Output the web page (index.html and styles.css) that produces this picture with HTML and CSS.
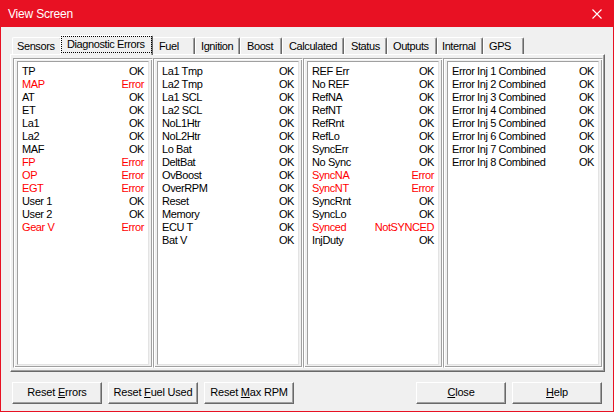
FILE: index.html
```html
<!DOCTYPE html>
<html>
<head>
<meta charset="utf-8">
<title>View Screen</title>
<link rel="stylesheet" href="styles.css">
</head>
<body>
<div class="window">
  <div class="titlebar">
    <span class="title">View Screen</span>
    <svg class="close" width="10" height="10" viewBox="0 0 10 10"><path d="M0.5 0.5 L9.5 9.5 M9.5 0.5 L0.5 9.5" stroke="#fff" stroke-width="1.1" fill="none"/></svg>
  </div>
  <div class="main">
    <div class="tabs">
      <div class="tab w-sensors">Sensors</div>
      <div class="tab tab-active"><span class="focus">Diagnostic Errors</span></div>
      <div class="tab w-fuel">Fuel</div>
      <div class="tab w-ignition">Ignition</div>
      <div class="tab w-boost">Boost</div>
      <div class="tab w-calc">Calculated</div>
      <div class="tab w-status">Status</div>
      <div class="tab w-outputs">Outputs</div>
      <div class="tab w-internal">Internal</div>
      <div class="tab w-gps">GPS</div>
    </div>
    <div class="panel">
      <div class="frame c1">
        <div class="list">
          <div class="row"><span>TP</span><span>OK</span></div>
          <div class="row err"><span>MAP</span><span>Error</span></div>
          <div class="row"><span>AT</span><span>OK</span></div>
          <div class="row"><span>ET</span><span>OK</span></div>
          <div class="row"><span>La1</span><span>OK</span></div>
          <div class="row"><span>La2</span><span>OK</span></div>
          <div class="row"><span>MAF</span><span>OK</span></div>
          <div class="row err"><span>FP</span><span>Error</span></div>
          <div class="row err"><span>OP</span><span>Error</span></div>
          <div class="row err"><span>EGT</span><span>Error</span></div>
          <div class="row"><span>User 1</span><span>OK</span></div>
          <div class="row"><span>User 2</span><span>OK</span></div>
          <div class="row err"><span>Gear V</span><span>Error</span></div>
        </div>
      </div>
      <div class="frame c2">
        <div class="list">
          <div class="row"><span>La1 Tmp</span><span>OK</span></div>
          <div class="row"><span>La2 Tmp</span><span>OK</span></div>
          <div class="row"><span>La1 SCL</span><span>OK</span></div>
          <div class="row"><span>La2 SCL</span><span>OK</span></div>
          <div class="row"><span>NoL1Htr</span><span>OK</span></div>
          <div class="row"><span>NoL2Htr</span><span>OK</span></div>
          <div class="row"><span>Lo Bat</span><span>OK</span></div>
          <div class="row"><span>DeltBat</span><span>OK</span></div>
          <div class="row"><span>OvBoost</span><span>OK</span></div>
          <div class="row"><span>OverRPM</span><span>OK</span></div>
          <div class="row"><span>Reset</span><span>OK</span></div>
          <div class="row"><span>Memory</span><span>OK</span></div>
          <div class="row"><span>ECU T</span><span>OK</span></div>
          <div class="row"><span>Bat V</span><span>OK</span></div>
        </div>
      </div>
      <div class="frame c3">
        <div class="list">
          <div class="row"><span>REF Err</span><span>OK</span></div>
          <div class="row"><span>No REF</span><span>OK</span></div>
          <div class="row"><span>RefNA</span><span>OK</span></div>
          <div class="row"><span>RefNT</span><span>OK</span></div>
          <div class="row"><span>RefRnt</span><span>OK</span></div>
          <div class="row"><span>RefLo</span><span>OK</span></div>
          <div class="row"><span>SyncErr</span><span>OK</span></div>
          <div class="row"><span>No Sync</span><span>OK</span></div>
          <div class="row err"><span>SyncNA</span><span>Error</span></div>
          <div class="row err"><span>SyncNT</span><span>Error</span></div>
          <div class="row"><span>SyncRnt</span><span>OK</span></div>
          <div class="row"><span>SyncLo</span><span>OK</span></div>
          <div class="row err"><span>Synced</span><span>NotSYNCED</span></div>
          <div class="row"><span>InjDuty</span><span>OK</span></div>
        </div>
      </div>
      <div class="frame c4">
        <div class="list">
          <div class="row"><span>Error Inj 1 Combined</span><span>OK</span></div>
          <div class="row"><span>Error Inj 2 Combined</span><span>OK</span></div>
          <div class="row"><span>Error Inj 3 Combined</span><span>OK</span></div>
          <div class="row"><span>Error Inj 4 Combined</span><span>OK</span></div>
          <div class="row"><span>Error Inj 5 Combined</span><span>OK</span></div>
          <div class="row"><span>Error Inj 6 Combined</span><span>OK</span></div>
          <div class="row"><span>Error Inj 7 Combined</span><span>OK</span></div>
          <div class="row"><span>Error Inj 8 Combined</span><span>OK</span></div>
        </div>
      </div>
    </div>
    <div class="buttons">
      <div class="btn-group">
        <div class="btn">Reset <u>E</u>rrors</div>
        <div class="btn">Reset <u>F</u>uel Used</div>
        <div class="btn">Reset <u>M</u>ax RPM</div>
      </div>
      <div class="btn-group">
        <div class="btn"><u>C</u>lose</div>
        <div class="btn"><u>H</u>elp</div>
      </div>
    </div>
  </div>
</div>
</body>
</html>
```

FILE: styles.css
```css
html, body {
  margin: 0;
  padding: 0;
  background: #f0f0f0;
}

body {
  font-family: "Liberation Sans", Arial, sans-serif;
  font-size: 11px;
  color: #000;
}

.window {
  width: 614px;
  height: 412px;
  box-sizing: border-box;
  border: 1px solid #e81123;
  background: #f0f0f0;
  display: flex;
  flex-direction: column;
}

.titlebar {
  height: 26px;
  flex: none;
  background: #e81123;
  display: flex;
  align-items: center;
  justify-content: space-between;
  padding: 0 11px 0 7px;
}

.title {
  color: #fff;
  font-size: 12px;
  letter-spacing: -0.2px;
}

.close {
  display: block;
}

.main {
  padding: 8px 8px 0 9px;
  display: flex;
  flex-direction: column;
}

.tabs {
  height: 19px;
  display: flex;
  align-items: flex-end;
  padding-left: 2px;
  letter-spacing: -0.4px;
}

.tab {
  box-sizing: border-box;
  height: 17px;
  line-height: 16px;
  padding-left: 5px;
  white-space: nowrap;
  border-top: 1px solid #fff;
  border-left: 1px solid #fff;
  border-right: 1px solid #696969;
  box-shadow: inset -1px 0 0 #a0a0a0;
  border-radius: 2px 2px 0 0;
  background: #f0f0f0;
}

.w-sensors { width: 50px; padding-left: 4px; }
.w-fuel { width: 44px; padding-left: 7px; }
.w-ignition { width: 45px; padding-left: 5px; }
.w-boost { width: 42px; padding-left: 6px; }
.w-calc { width: 62px; padding-left: 6px; }
.w-status { width: 43px; padding-left: 6px; }
.w-outputs { width: 50px; padding-left: 5px; }
.w-internal { width: 46px; padding-left: 4px; }
.w-gps { width: 41px; padding-left: 5px; }

.tab-active {
  position: relative;
  z-index: 1;
  width: 93px;
  height: 20px;
  margin: 0 -2px -1px -2px;
  padding: 0;
}

.focus {
  display: block;
  box-sizing: border-box;
  height: 17px;
  margin: 0 0 0 0;
  border: 1px dotted #000;
  line-height: 14px;
  padding-left: 5px;
}

.panel {
  box-sizing: border-box;
  width: 595px;
  height: 318px;
  border-top: 1px solid #fff;
  border-left: 1px solid #fff;
  border-right: 1px solid #696969;
  border-bottom: 1px solid #696969;
  box-shadow: inset -1px -1px 0 #a0a0a0;
  padding: 3px 0 0 2px;
  display: flex;
}

.frame {
  box-sizing: border-box;
  height: 310px;
  border: 1px solid #a0a0a0;
  border-right-color: #fff;
  border-bottom-color: #fff;
  box-shadow: inset 1px 1px 0 #fff, inset -1px -1px 0 #a0a0a0;
  padding: 2px 3px;
  display: flex;
  flex: none;
}

.c1 { width: 140px; }
.c2 { width: 150px; }
.c3 { width: 140px; }
.c4 { width: 160px; }

.list {
  flex: 1;
  background: #fff;
  border-top: 1px solid #a0a0a0;
  border-left: 1px solid #a0a0a0;
  border-right: 1px solid #e3e3e3;
  border-bottom: 1px solid #e3e3e3;
  padding: 3px 4px 0 4px;
  letter-spacing: -0.4px;
}

.row {
  height: 13px;
  line-height: 13px;
  display: flex;
  justify-content: space-between;
  white-space: nowrap;
}

.row.err {
  color: #ff0000;
}

.buttons {
  margin-top: 10px;
  display: flex;
  justify-content: space-between;
  padding: 0 3px 0 2px;
}

.btn-group {
  display: flex;
  gap: 6px;
}

.btn {
  box-sizing: border-box;
  width: 90px;
  height: 22px;
  line-height: 19px;
  text-align: center;
  background: #f0f0f0;
  border-top: 1px solid #fff;
  border-left: 1px solid #fff;
  border-right: 1px solid #696969;
  border-bottom: 1px solid #696969;
  box-shadow: inset -1px -1px 0 #a0a0a0;
  letter-spacing: -0.2px;
}

.btn u {
  text-decoration: underline;
  text-underline-offset: 1px;
}
```
